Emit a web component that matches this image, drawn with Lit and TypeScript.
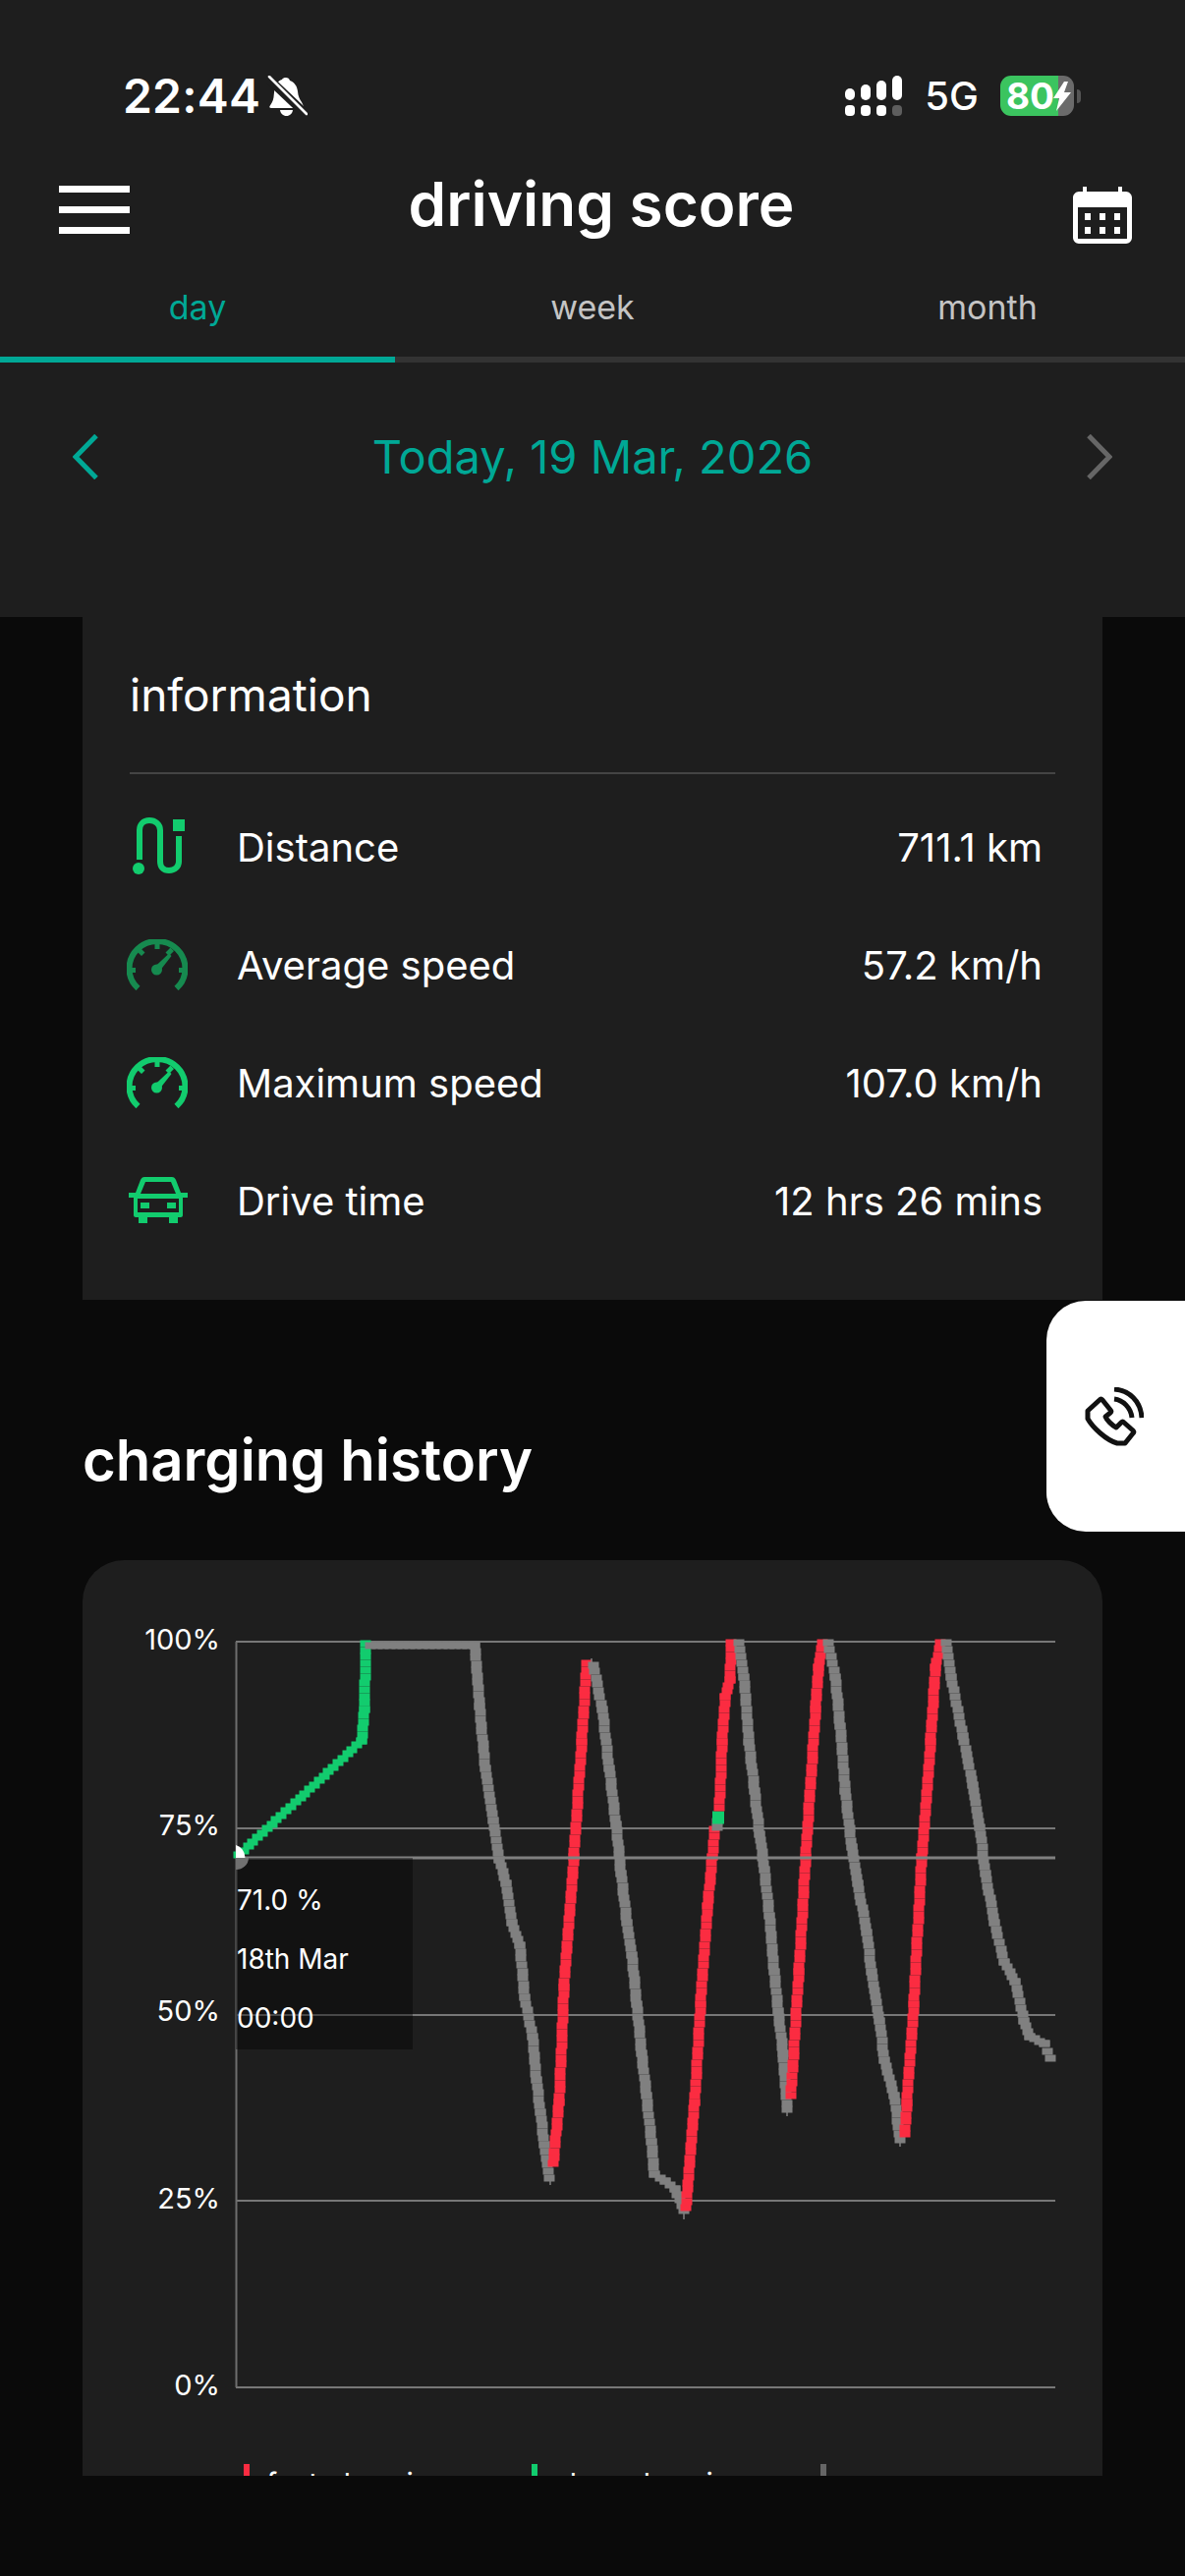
import { LitElement, html, css, svg } from "lit";
import { customElement } from "lit/decorators.js";

type Pt = [number, number];
const GREEN = "#12cc6e";
const RED = "#fb2c41";
const GRAY = "#808080";

const series: { c: string; w: number; p: Pt[] }[] = [
  { c: GREEN, w: 11, p: [[243, 1888], [368, 1772], [371, 1740], [372, 1673]] },
  { c: GRAY, w: 11, p: [[377, 1675], [483, 1675], [488, 1737], [494, 1800], [502, 1853], [508, 1893], [515, 1917], [521, 1957], [529, 1980], [534, 2033], [542, 2073], [546, 2117], [550, 2150], [554, 2183], [559, 2217]] },
  { c: RED, w: 11, p: [[563, 2202], [569, 2140], [574, 2023], [584, 1890], [592, 1773], [597, 1693]] },
  { c: GRAY, w: 11, p: [[604, 1695], [613, 1740], [620, 1800], [627, 1857], [632, 1907], [638, 1957], [643, 1990], [648, 2040], [653, 2090], [658, 2133], [663, 2180], [666, 2213], [677, 2220], [687, 2228], [696, 2250]] },
  { c: RED, w: 11, p: [[698, 2247], [707, 2140], [713, 2040], [720, 1940], [725, 1890], [727, 1862]] },
  { c: GRAY, w: 11, p: [[730, 1860], [730, 1854]] },
  { c: GREEN, w: 12, p: [[731, 1853], [731, 1847]] },
  { c: RED, w: 11, p: [[732, 1840], [735, 1773], [738, 1727], [743, 1710], [744, 1672]] },
  { c: GRAY, w: 11, p: [[752, 1672], [757, 1707], [762, 1773], [768, 1823], [773, 1867], [778, 1903], [783, 1950], [788, 2007], [792, 2047], [797, 2090], [801, 2147]] },
  { c: RED, w: 11, p: [[805, 2133], [813, 2007], [820, 1890], [830, 1740], [833, 1697], [837, 1672]] },
  { c: GRAY, w: 11, p: [[843, 1672], [850, 1707], [855, 1757], [860, 1823], [867, 1880], [873, 1917], [882, 1967], [887, 2007], [895, 2057], [900, 2097], [910, 2133], [916, 2178]] },
  { c: RED, w: 11, p: [[921, 2172], [923, 2140], [930, 2040], [938, 1890], [947, 1773], [952, 1697], [957, 1672]] },
  { c: GRAY, w: 11, p: [[963, 1672], [968, 1707], [980, 1767], [990, 1817], [997, 1860], [1003, 1907], [1012, 1957], [1022, 1997], [1033, 2017], [1042, 2057], [1048, 2073], [1063, 2080], [1069, 2095]] },
];

const ticks: Pt[] = [[560, 2217], [602, 1688], [696, 2252], [801, 2147], [916, 2178]];

function squares(s: { c: string; w: number; p: Pt[] }) {
  const out: unknown[] = [];
  for (let i = 0; i < s.p.length - 1; i++) {
    const [x0, y0] = s.p[i];
    const [x1, y1] = s.p[i + 1];
    const len = Math.hypot(x1 - x0, y1 - y0);
    const n = Math.max(1, Math.round(len / 6.5));
    for (let k = 0; k <= n; k++) {
      const x = Math.round(x0 + ((x1 - x0) * k) / n);
      const y = Math.round(y0 + ((y1 - y0) * k) / n);
      out.push(svg`<rect x=${x - s.w / 2} y=${y - 3.5} width=${s.w} height="7" fill=${s.c}></rect>`);
    }
  }
  return out;
}

const Y0 = 1588;
const X0 = 84;
const grid = [1671, 1861, 2051, 2240, 2430];

@customElement("app-root")
export class AppRoot extends LitElement {
  static styles = css`
    :host { display: block; width: 1206px; height: 2622px; background: #0a0a0a; overflow: hidden; position: relative;
      font-family: Inter, "Noto Sans", sans-serif; color: #fff; }
    .head { background: #1e1e1e; height: 628px; display: flex; flex-direction: column; }
    .status { height: 178px; box-sizing: border-box; padding: 74px 106px 0 125px; display: flex; justify-content: space-between; align-items: flex-start; }
    .time { display: flex; align-items: center; gap: 6px; font-size: 48px; font-weight: 600; line-height: 48px; letter-spacing: 0.2px; }
    .sys { display: flex; align-items: center; margin-top: 3px; }
    .fiveg { font-size: 40px; font-weight: 500; line-height: 40px; margin: 0 22px 0 21px; font-family: Inter, sans-serif; }
    .batt { display: flex; align-items: center; }
    .cell { width: 75px; height: 41px; border-radius: 11px; overflow: hidden; position: relative; background: linear-gradient(90deg, #3bc45f 0 59px, #6b6b6b 59px); font-size: 37px; font-weight: 700; line-height: 41px; text-indent: 6px; }
    .cell svg { position: absolute; left: 54px; top: 6px; }
    .nub { width: 4px; height: 14px; margin-left: 3px; background: #555; border-radius: 0 4px 4px 0; }
    .bar { height: 76px; display: flex; justify-content: space-between; align-items: center; box-sizing: border-box; padding: 0 54px 0 60px; }
    .title { font-size: 62px; font-weight: 600; line-height: 76px; margin-top: -16px; }
    .menu { display: flex; flex-direction: column; gap: 14px; width: 72px; margin-top: -6px; }
    .menu i { display: block; height: 7px; background: #fff; }
    .tabs { display: grid; grid-template-columns: repeat(3, 1fr); height: 65px; margin-top: 39px; margin-bottom: 0; }
    .tab { text-align: center; font-size: 34px; line-height: 40px; color: #c4c4c4; }
    .tab.on { color: #00a896; }
    .track { height: 6px; background: #333; margin-top: 5px; }
    .track i { display: block; width: 402px; height: 6px; background: #00a896; }
    .date { display: flex; justify-content: space-between; align-items: center; padding: 0 74px; margin-top: 66px; height: 60px; }
    .date span { font-size: 47px; line-height: 60px; color: #00a896; }
    .info { margin: 0 84px; height: 695px; background: #1e1e1e; box-sizing: border-box; padding: 0 48px; }
    .info h2 { margin: 0; font-size: 46px; font-weight: 400; line-height: 60px; padding-top: 49px; padding-bottom: 49px; border-bottom: 2px solid #444; }
    .row { display: flex; align-items: center; height: 120px; padding-right: 13px; }
    .rows { padding-top: 14px; }
    .ic { width: 109px; flex: none; }
    .ic svg { display: block; }
    .row .l { flex: 1; font-size: 40px; }
    .row .v { font-size: 40px; }
    .sect { margin: 134px 84px 0; font-size: 58px; font-weight: 600; line-height: 58px; height: 58px; }
    .chart { position: relative; margin: 73px 84px 0; height: 932px; background: #1e1e1e; border-radius: 42px 42px 0 0; overflow: hidden; }
    .chart > svg { position: absolute; left: 0; top: 0; }
    .ax { position: absolute; width: 140px; left: 0; text-align: right; font-size: 29px; line-height: 34px; }
    .tip { position: absolute; left: 156px; top: 303px; width: 180px; height: 195px; background: rgba(0,0,0,0.4); font-size: 28px; line-height: 60px; padding-top: 13px; box-sizing: border-box; padding-left: 1px; }
    .tip div { height: 60px; }
    .legend { position: absolute; top: 920px; left: 0; width: 100%; height: 60px; }
    .lg { position: absolute; top: 0; display: flex; gap: 17px; font-size: 30px; line-height: 40px; }
    .lg i { display: block; width: 6px; height: 40px; }
    .fab { position: absolute; left: 1065px; top: 1324px; width: 141px; height: 235px; background: #fff; border-radius: 40px 0 0 40px; display: flex; align-items: center; justify-content: center; padding-left: 0; }
  `;

  private bell() {
    return html`<svg width="42" height="42" viewBox="0 0 42 42" fill="#fff">
      <path d="M20 2c2 0 3.500 1 4 3 5 2 7.500 6 8 11 .4 5 2 8 4 11 1 2 2 4 2 5 0 .8-.6 1-1.500 1H5c-1.500 0-2-1-1.500-2 1-2 3.500-4.500 4-9 .4-3.500.6-6.500 1-9 1-4 3.500-8 7.500-9 .5-1.500 2.500-2 4-2z"></path>
      <path d="M14 35h13c-.5 3.500-3 6-6.500 6S14.500 38.500 14 35z"></path>
      <path d="M1 2 41 40" stroke="#1e1e1e" stroke-width="9"></path>
      <path d="M3 1 41 39" stroke="#fff" stroke-width="2.600" stroke-linecap="round"></path>
    </svg>`;
  }

  private signal() {
    const tops = [13, 9, 5, 0];
    const cols = [0, 16, 32, 48];
    return html`<svg width="60" height="41" viewBox="0 0 60 41" fill="#fff">
      ${cols.map((x, i) => svg`<rect x=${x} y=${tops[i]} width="10" height=${25 - tops[i]} rx="5"></rect>`)}
      ${cols.map((x, i) => svg`<rect x=${x} y="30" width="10" height="11" rx="4" fill=${i === 3 ? "#5e5e5e" : "#fff"}></rect>`)}
    </svg>`;
  }

  private gauge(color: string) {
    return html`<svg width="62" height="52" viewBox="0 0 62 52" fill=${color} style="margin-left:-3px">
      <path d="M11.500 50C6 45 2.500 38 2.500 30 2.500 14.500 15 2 31 2s28.500 12.500 28.500 28c0 8-3.500 15-9 20" fill="none" stroke=${color} stroke-width="6"></path>
      <path d="M28.500 4h5v6h-5zM10 12l3.500-3.500 5 5-3.500 3.500zM48 12l-3.500-3.500-5 5 3.500 3.500zM2 29h7v5H2zM53 29h7v5h-7z"></path>
      <circle cx="30.500" cy="31" r="5.500"></circle>
      <path d="M27.500 29 43 14.500 45.500 17 33 33z"></path>
    </svg>`;
  }

  render() {
    return html`
      <div class="head">
        <div class="status">
          <div class="time">22:44 ${this.bell()}</div>
          <div class="sys">
            ${this.signal()}
            <span class="fiveg">5G</span>
            <div class="batt">
              <div class="cell">80<svg width="18" height="30" viewBox="0 0 18 30" fill="#fff"><path d="M11 0 0 17h6l-3 13L18 11h-7l4-11z"></path></svg></div>
              <div class="nub"></div>
            </div>
          </div>
        </div>
        <div class="bar">
          <div class="menu"><i></i><i></i><i></i></div>
          <div class="title">driving score</div>
          <svg width="60" height="58" viewBox="0 0 60 58" fill="#fff" style="margin-top:6px">
            <path fill-rule="evenodd" d="M10 0h4v5h32V0h4v5h4c3 0 6 3 6 6v41c0 3-3 6-6 6H6c-3 0-6-3-6-6V11c0-3 3-6 6-6h4zM5 21v31c0 1 0 1 1 1h48c1 0 1 0 1-1V21z"></path>
            <path d="M12 27h6v7h-6zM27 27h6v7h-6zM42 27h6v7h-6zM12 41h6v7h-6zM27 41h6v7h-6zM42 41h6v7h-6z"></path>
          </svg>
        </div>
        <div class="tabs"><div class="tab on">day</div><div class="tab">week</div><div class="tab">month</div></div>
        <div class="track"><i></i></div>
        <div class="date">
          <svg width="26" height="46" viewBox="0 0 26 46" fill="none" stroke="#00a896" stroke-width="5"><path d="M24 1.500 3 23l21 21.500"></path></svg>
          <span>Today, 19 Mar, 2026</span>
          <svg width="26" height="46" viewBox="0 0 26 46" fill="none" stroke="#666" stroke-width="5"><path d="M2 1.500 23 23 2 44.500"></path></svg>
        </div>
      </div>
      <div class="info">
        <h2>information</h2>
        <div class="rows">
          <div class="row">
            <div class="ic"><svg width="60" height="62" viewBox="0 0 60 62" fill="${GREEN}" style="margin-left:2px">
              <path d="M8 44V14c0-6 4-10 10-10s11 4 11 10v32c0 5 3 9 9 9s10-4 10-9V20" fill="none" stroke="${GREEN}" stroke-width="6"></path>
              <circle cx="7" cy="53" r="6"></circle><rect x="42" y="3" width="12" height="12"></rect>
            </svg></div>
            <span class="l">Distance</span><span class="v">711.1 km</span>
          </div>
          <div class="row"><div class="ic" style="opacity:.62">${this.gauge(GREEN)}</div><span class="l">Average speed</span><span class="v">57.2 km/h</span></div>
          <div class="row"><div class="ic">${this.gauge(GREEN)}</div><span class="l">Maximum speed</span><span class="v">107.0 km/h</span></div>
          <div class="row">
            <div class="ic"><svg width="60" height="48" viewBox="0 0 60 48" fill="${GREEN}" style="margin-left:-1px">
              <path fill-rule="evenodd" d="M16 0h28c2 0 3 1 4 3l5 13h7v5h-5v18c0 1-1 2-2 2h-3v6H41v-6H19v6H10v-6H7c-1 0-2-1-2-2V21H0v-5h7l5-13c1-2 2-3 4-3zm1 5-5 12h36L43 5zM9 22v14h42V22zm3 4h9v6h-9zm27 0h9v6h-9z"></path>
            </svg></div>
            <span class="l">Drive time</span><span class="v">12 hrs 26 mins</span>
          </div>
        </div>
      </div>
      <div class="sect">charging history</div>
      <div class="chart">
        <svg width="1038" height="932" viewBox="${X0} ${Y0} 1038 932">
          ${grid.map((y) => svg`<line x1="240" x2="1074" y1=${y} y2=${y} stroke="#777" stroke-width="2"></line>`)}
          <line x1="240.500" x2="240.500" y1="1671" y2="2430" stroke="#6e6e6e" stroke-width="2"></line>
          ${series.map((s) => squares(s))}
          ${ticks.map(([x, y]) => svg`<line x1=${x} x2=${x} y1=${y} y2=${y + (y < 1700 ? 8 : 7)} stroke="#808080" stroke-width="1.500"></line>`)}
          <line x1="240" x2="1074" y1="1891" y2="1891" stroke="#808080" stroke-width="3"></line>
          <path d="M240 1878a13 13 0 0 1 0 25z" fill="#fff"></path>
          <path d="M240 1891h13a13 12 0 0 1-13 12z" fill="#bdbdbd"></path>
        </svg>
        ${["100%", "75%", "50%", "25%", "0%"].map((t, i) => html`<div class="ax" style="top:${[64, 253, 442, 633, 823][i]}px">${t}</div>`)}
        <div class="tip"><div>71.0 %</div><div>18th Mar</div><div>00:00</div></div>
        <div class="legend">
          <div class="lg" style="left:164px"><i style="background:${RED}"></i>fast charging</div>
          <div class="lg" style="left:457px"><i style="background:${GREEN}"></i>slow charging</div>
          <div class="lg" style="left:751px"><i style="background:#666"></i></div>
        </div>
      </div>
      <div class="fab">
        <svg width="60" height="60" viewBox="0 0 60 60" fill="none" stroke="#111" style="margin-right:3px">
          <path d="M3 24 15 13c1-1 2-1 3 0l8 10c1 1 1 2 0 3l-5 4c1 3 7 9 11 11l5-5c1-1 2-1 3 0l9 8c1 1 1 2 0 3l-8 10H33C22 54 8 41 3 32z" stroke-width="5" stroke-linejoin="round"></path>
          <path d="M30 2C45 3 57 14 58 31" stroke-width="5"></path>
          <path d="M30 12C39 13 47 21 48 31" stroke-width="5"></path>
        </svg>
      </div>
    `;
  }
}
